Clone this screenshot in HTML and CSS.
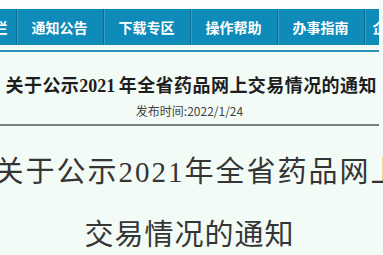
FILE: index.html
```html
<!DOCTYPE html>
<html lang="zh-CN">
<head>
<meta charset="utf-8">
<title>关于公示2021年全省药品网上交易情况的通知</title>
<link rel="stylesheet" href="styles.css">
</head>
<body>
<div class="page">
  <div class="top"></div>
  <nav class="nav">
    <a class="nav-item">政策法规栏</a>
    <a class="nav-item">通知公告</a>
    <a class="nav-item">下载专区</a>
    <a class="nav-item">操作帮助</a>
    <a class="nav-item">办事指南</a>
    <a class="nav-item">企业服务区</a>
  </nav>
  <div class="rule"></div>
  <header class="header">
    <h1 class="title">关于公示<span class="num">2021</span>年全省药品网上交易情况的通知</h1>
    <div class="date">发布时间:2022/1/24</div>
  </header>
  <h2 class="big">
    <span class="big-line first">关于公示<span class="num">2021</span>年全省药品网上</span>
    <span class="big-line">交易情况的通知</span>
  </h2>
</div>
</body>
</html>
```
FILE: styles.css
```css
html, body {
  margin: 0;
  padding: 0;
}
body {
  width: 383px;
  height: 255px;
  overflow: hidden;
  background: #f3fbf7;
  font-family: "Noto Sans CJK SC", "Noto Sans", sans-serif;
}
.page {
  width: 379px;
}
.top {
  height: 9px;
  background: #fbfefc;
}
.nav {
  display: flex;
  justify-content: center;
  height: 36px;
  background: #0e8bb9;
}
.nav-item {
  flex: 0 0 87px;
  box-sizing: border-box;
  border-left: 1px solid #0a6c93;
  box-shadow: inset 1px 0 0 rgba(255, 255, 255, 0.18);
  color: #ffffff;
  font-size: 14px;
  font-weight: 700;
  line-height: 36px;
  text-align: center;
  white-space: nowrap;
}
.rule {
  margin-top: 5px;
  height: 2px;
  background: #2a95b5;
}
.header {
  padding: 21px 0 5px;
  border-bottom: 2px solid #7a7f7c;
  text-align: center;
}
.title {
  width: 368px;
  margin: 0 auto;
  font-size: 18px;
  font-weight: 700;
  letter-spacing: -3px;
  line-height: 22px;
  color: #1e1e1e;
  text-align: justify;
  text-align-last: justify;
  text-justify: inter-character;
}
.num {
  font-family: "Liberation Serif", serif;
  letter-spacing: 0;
}
.date {
  margin-top: 6px;
  font-size: 12px;
  line-height: 16px;
  color: #444444;
}
.big {
  display: flex;
  flex-direction: column;
  align-items: center;
  margin: 13px 0 0;
  font-size: 29px;
  font-weight: 400;
  letter-spacing: 1px;
  line-height: 60px;
  color: #353535;
}
.big .num {
  letter-spacing: 1px;
}
.big-line {
  white-space: nowrap;
}
.big-line.first {
  margin-left: 17px;
  letter-spacing: 2px;
}
.big-line.first .num {
  letter-spacing: 2px;
}
```
